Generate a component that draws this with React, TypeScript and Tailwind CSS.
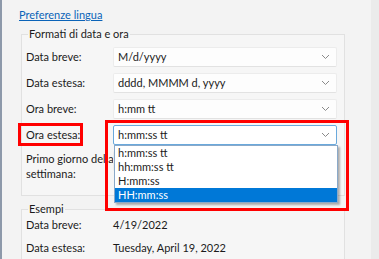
import React from "react";

const font = { fontFamily: 'Lato, "Noto Sans", sans-serif' };

function Chevron() {
  return (
    <svg width="9" height="6" viewBox="0 0 9 6" className="shrink-0">
      <path d="M1 1 L4.5 4.5 L8 1" fill="none" stroke="#8a8a8a" strokeWidth="1" />
    </svg>
  );
}

function Combo({ value, open }: { value: string; open?: boolean }) {
  return (
    <div
      className={
        "w-[224px] h-[20px] flex items-center justify-between pl-[4px] pr-[6px] rounded-[2px] " +
        (open ? "bg-white border border-[#6aa9dc]" : "bg-[#fdfdfd] border border-[#ececec] border-b-[#e2e2e2]")
      }
    >
      <span className="text-[11px] leading-[16px] text-[#1b1b1b]">{value}</span>
      <Chevron />
    </div>
  );
}

function Row({ label, value, open }: { label: string; value: string; open?: boolean }) {
  return (
    <div className="flex items-center h-[20px]">
      <div className="w-[87px] text-[11px] leading-[16px] text-[#1b1b1b]">{label}</div>
      <Combo value={value} open={open} />
    </div>
  );
}

export default function App() {
  const items = ["h:mm:ss tt", "hh:mm:ss tt", "H:mm:ss", "HH:mm:ss"];
  return (
    <div className="w-[379px] h-[259px] bg-[#f3f3f3] flex overflow-hidden relative" style={font}>
      <div className="w-[2px] bg-[#8d99aa]" />
      <div className="flex-1 pl-[17px]">
        <div className="mt-[7px] h-[16px] mb-[3px] text-[11px] leading-[16px] text-[#0a63b8] underline">
          Preferenze lingua
        </div>
        <fieldset className="ml-[2px] w-[324px] h-[170px] border border-[#e1e1e1] pl-[4px] pr-[6px] pt-[5px] bg-[#f6f6f6]">
          <legend className="ml-[2px] px-[1px] text-[11px] leading-[16px] text-[#1b1b1b]">
            Formati di data e ora
          </legend>
          <div className="flex flex-col gap-[6px]">
            <Row label="Data breve:" value="M/d/yyyy" />
            <Row label="Data estesa:" value="dddd, MMMM d, yyyy" />
            <Row label="Ora breve:" value="h:mm tt" />
            <Row label="Ora estesa:" value="h:mm:ss tt" open />
            <div className="flex items-start">
              <div className="w-[87px] text-[11px] leading-[15px] text-[#1b1b1b] whitespace-nowrap">
                Primo giorno della
                <br />
                settimana:
              </div>
              <Combo value="" />
            </div>
          </div>
        </fieldset>
        <fieldset className="ml-[2px] mt-[5px] w-[324px] h-[80px] border border-[#e1e1e1] pl-[4px] pr-[6px] bg-[#f6f6f6]">
          <legend className="ml-[2px] px-[1px] text-[11px] leading-[16px] text-[#1b1b1b]">Esempi</legend>
          <div className="flex flex-col gap-[7px]">
            <div className="flex text-[11px] leading-[16px] text-[#1b1b1b]">
              <div className="w-[87px]">Data breve:</div>
              <div>4/19/2022</div>
            </div>
            <div className="flex text-[11px] leading-[16px] text-[#1b1b1b]">
              <div className="w-[87px]">Data estesa:</div>
              <div>Tuesday, April 19, 2022</div>
            </div>
          </div>
        </fieldset>
      </div>
      <div className="w-[8px] bg-[#ebebeb]" />

      {/* Open dropdown list */}
      <div className="absolute left-[114px] top-[145px] w-[224px] bg-white border border-[#8aa9c9] shadow-[2px_2px_2px_rgba(0,0,0,0.3)]">
        {items.map((it, i) => (
          <div
            key={it}
            className={
              "h-[14px] pl-[3px] text-[11px] leading-[14px] " +
              (i === 3 ? "bg-[#0078d7] text-white" : "text-[#1b1b1b]")
            }
          >
            {it}
          </div>
        ))}
      </div>

      {/* Red highlight boxes */}
      <div className="absolute left-[18px] top-[123px] w-[65px] h-[23px] border-[3px] border-[#ff0000]" />
      <div className="absolute left-[105px] top-[120px] w-[244px] h-[91px] border-[3px] border-[#ff0000]" />
    </div>
  );
}
